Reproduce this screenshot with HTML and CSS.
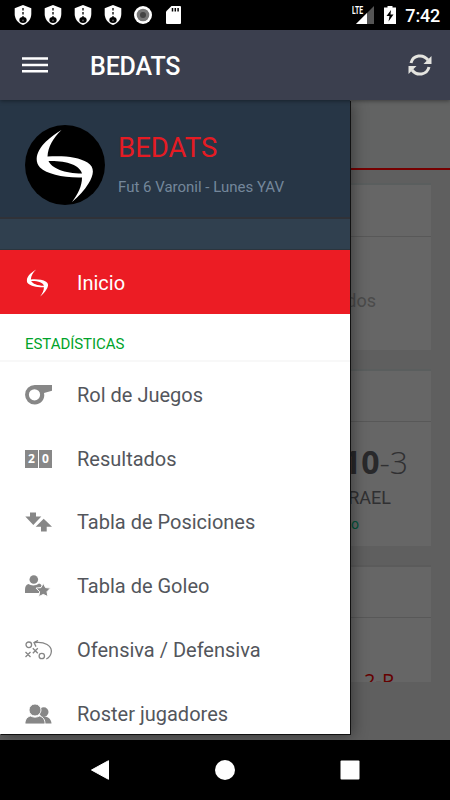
FILE: index.html
```html
<!DOCTYPE html>
<html lang="es">
<head>
<meta charset="utf-8">
<title>BEDATS</title>
<link rel="stylesheet" href="styles.css">
</head>
<body>
<svg class="defs" aria-hidden="true">
  <defs>
    <symbol id="shield" viewBox="0 0 18 20">
      <path fill="#fff" d="M9 0 17.300 3.200V9c0 5-3.300 9-8.300 11C4 18 .7 14 .7 9V3.200z"/>
      <path stroke="#000" stroke-width="1.300" stroke-dasharray="2.500 1.500" d="M9 3v9"/>
      <ellipse cx="9" cy="15" rx="3.700" ry="3"/><circle cx="9" cy="15.500" r="1" fill="#555"/>
    </symbol>
    <symbol id="swirl" viewBox="0 0 58 74">
      <path fill="currentColor" fill-rule="evenodd" d="M25.500 1C17 9 12 18 11.500 27.500c17-1 31 .5 40 6 8 5 6 13 1 21-4 7-10 13-16.500 18.500C42 65 46 57 46 48.500 27 49 11 45 4 38.500-3 31 2 20 10 12.500 15 8 20 4 25.500 1zM12.500 32c3 7 16 12.500 33.500 12.500C44 36 30 31.500 12.500 32z"/>
    </symbol>
  </defs>
</svg>
<div class="screen">
  <div class="status">
    <div class="status-left">
      <svg class="shield"><use href="#shield"/></svg>
      <svg class="shield"><use href="#shield"/></svg>
      <svg class="shield"><use href="#shield"/></svg>
      <svg class="shield"><use href="#shield"/></svg>
      <svg class="disc" viewBox="0 0 18 18"><circle cx="9" cy="9" r="9" fill="#fff"/><circle cx="9" cy="9" r="6.300" fill="#777"/><circle cx="9" cy="9" r="3" fill="#444"/></svg>
      <svg class="sd" viewBox="0 0 15 18"><path fill="#fff" d="M5.500 0H14q1 0 1 1v16q0 1-1 1H1q-1 0-1-1V5.500z"/><path stroke="#000" stroke-width="1.500" d="M6.500 2v3.500M9.300 2v3.500M12.100 2v3.500"/></svg>
    </div>
    <div class="status-right">
      <span class="lte">LTE</span>
      <svg class="signal" viewBox="0 0 18 18"><path fill="#555" d="M18 0v18H0z"/><path fill="#fff" d="M11 7v11H0z"/></svg>
      <svg class="battery" viewBox="0 0 12 18"><path fill="#fff" d="M3.500 0h5v1.500H12V18H0V1.500h3.500z"/><path d="M7 4 2.500 10H5.500L4.500 15.500 9.500 8.500H6.500z"/></svg>
      <span class="clock">7:42</span>
    </div>
  </div>
  <header class="appbar">
    <svg class="burger" viewBox="0 0 26 16"><path stroke="#fff" stroke-width="2.500" d="M0 1.500h26M0 8h26M0 14.300h26"/></svg>
    <h1>BEDATS</h1>
    <svg class="sync" viewBox="0 0 24 22"><g fill="none" stroke="#e4e4df" stroke-width="3"><path d="M3 9C5 1 15-.5 20 6M21 13C19 21 9 22.500 4 16"/></g><path fill="#e4e4df" d="M23.500 2v8h-8zM.5 20v-8h8z"/></svg>
  </header>
  <main class="content">
    <div class="topband"></div>
    <section class="card first"><div class="card-head"></div><div class="card-body"><span class="faded">Sin resultados</span></div></section>
    <section class="card second"><div class="card-head"></div><div class="card-body"><div class="score"><b>10</b>-3</div><div class="team">ISRAEL</div><div class="state">Jugado</div></div></section>
    <section class="card third"><div class="card-head"></div><div class="card-body"><div class="pending">2-P</div></div></section>
  </main>
  <aside class="drawer">
    <div class="profile">
      <div class="avatar"><svg viewBox="0 0 58 74" preserveAspectRatio="none"><use href="#swirl"/></svg></div>
      <div class="who"><h2>BEDATS</h2><p>Fut 6 Varonil - Lunes YAV</p></div>
    </div>
    <div class="strip"></div>
    <a class="item active"><svg class="logo" viewBox="0 0 58 74"><use href="#swirl"/></svg><span>Inicio</span></a>
    <div class="heading">ESTADÍSTICAS</div>
    <nav>
      <a class="item"><svg viewBox="0 0 27 20"><path fill="#878787" fill-rule="evenodd" d="M9.800 0H27v5.700l-8 2.300c1.500 6-3 11.500-9.200 11.500A9.750 9.750 0 0 1 9.800 0zm-.3 4.200a5.600 5.600 0 1 0 0 11.200 5.600 5.600 0 0 0 0-11.200z"/></svg><span>Rol de Juegos</span></a>
      <a class="item"><span class="flip"><b>2</b><b>0</b></span><span>Resultados</span></a>
      <a class="item"><svg viewBox="0 0 27 20"><path fill="#878787" d="M5 .5h6v4h5.300L8.300 13 .3 4.500H5zM18.700 6.800 27 14.800h-5.300v4.700H16v-4.700h-5.300z"/></svg><span>Tabla de Posiciones</span></a>
      <a class="item"><svg class="scorer" viewBox="0 0 27 22"><g fill="#878787"><circle cx="8.800" cy="4.500" r="4.300"/><path d="M3.500 9C6 11 11 11 14 8.500c2 .5 3 2 3.500 4L12 13l4 3.500-1 1.500H0v-3C0 12 1 9.500 3.500 9z"/><path stroke="#fff" d="m18.300 8.300 2.200 4.300 5 .5-3.500 3.600 1 5-4.700-2.300-4.600 2.300.9-5-3.600-3.600 5-.5z"/></g></svg><span>Tabla de Goleo</span></a>
      <a class="item"><svg viewBox="0 0 27 20"><g fill="none" stroke="#858585" stroke-width="1.300"><circle cx="3.800" cy="4.800" r="2.800"/><circle cx="16.800" cy="16" r="2.700"/><path d="m.5 12 5 5m0-5-5 5M7.800 8.300l5 5m0-5-5 5M13 .5 9 2.600l2 4M9 2.600C20 1 27 6 26.300 12c-.3 3-2 5.500-5 7"/></g></svg><span>Ofensiva / Defensiva</span></a>
      <a class="item"><svg viewBox="0 0 27 20"><g fill="#878787"><circle cx="18.800" cy="8" r="4.700"/><path d="M15 12.500c6-1 11 1 11.500 7H15z"/><g stroke="#fff" stroke-width=".9"><circle cx="10" cy="6" r="6"/><path d="M0 20c0-4 1.500-7 5.500-8 3 1.500 6 1.500 9 0 4 1 5.500 4 5.500 8z"/></g></g></svg><span>Roster jugadores</span></a>
    </nav>
  </aside>
  <footer class="navbar">
    <svg viewBox="0 0 20 20"><path fill="#fff" stroke="#fff" stroke-linejoin="round" d="M18.500.7v18.600L1.500 10z"/></svg>
    <svg viewBox="0 0 20 20"><circle cx="10" cy="10" r="10" fill="#fff"/></svg>
    <svg viewBox="0 0 20 20"><rect x=".5" y=".5" width="19" height="19" rx="1" fill="#fff"/></svg>
  </footer>
</div>
</body>
</html>
```
FILE: styles.css
```css
* { box-sizing: border-box; }
body { margin: 0; font-family: Roboto, sans-serif; background: #000; }
h1, h2, p { margin: 0; font-weight: 400; }
svg { display: block; flex: none; }
.defs { position: absolute; width: 0; height: 0; }
.screen { position: relative; width: 450px; height: 800px; display: flex; flex-direction: column; overflow: hidden; }

.status { height: 30px; flex: none; background: #000; display: flex; justify-content: space-between; padding: 0 10px 0 14px; color: #fff; }
.status-left, .status-right { display: flex; align-items: center; }
.shield { width: 18px; height: 20px; margin-right: 12px; }
.disc { width: 18px; height: 18px; margin-right: 14px; }
.sd { width: 15px; height: 18px; }
.lte { font-size: 11px; font-weight: 700; line-height: 10px; align-self: flex-start; margin-top: 6px; width: 4px; white-space: nowrap; transform: scaleX(.62); transform-origin: left; }
.signal { width: 18px; height: 18px; margin-right: 10px; }
.battery { width: 12px; height: 18px; margin-right: 9px; }
.clock { font-size: 18px; font-weight: 500; line-height: 30px; letter-spacing: -.2px; padding-top: 1px; }

.appbar { position: relative; z-index: 3; height: 70px; flex: none; background: #3b3f4e; display: flex; align-items: center; padding: 0 18px 0 22px; box-shadow: 0 1px 4px rgba(0, 0, 0, .4); }
.burger { width: 26px; height: 16px; margin-right: 42px; }
.appbar h1 { flex: 1; font-size: 25px; font-weight: 500; line-height: 70px; letter-spacing: -.15px; color: #fff; padding-top: 3px; }
.sync { width: 24px; height: 22px; }

.content { flex: 1; background: #5f5f5f; overflow: hidden; }
.topband { height: 70px; background: #626363; border-bottom: 2px solid #760000; }
.card { width: 413px; margin-left: 18px; background: #666; border-top: 2px solid #5a5e5e; overflow: hidden; text-align: right; }
.first { margin-top: 13px; height: 167px; }
.second { margin-top: 19px; height: 177px; }
.third { margin-top: 19px; height: 117px; border-top-color: #5b5b5b; }
.card-head { height: 52px; border-bottom: 1px solid #585858; }
.second .card-head, .third .card-head { height: 51px; }
.card-body { display: flex; flex-direction: column; align-items: flex-end; }
.faded { margin: 52px 55px 0 0; font-size: 18px; line-height: 24px; color: #4b4b4b; }
.score { margin: 18px 23px 0 0; font: 300 32px/44px "Open Sans", sans-serif; color: #303032; }
.score b { font-weight: 700; color: #29292b; }
.team { margin: 2px 40px 0 0; font-size: 18px; line-height: 24px; color: #303032; }
.state { margin: 4px 72px 0 0; font-size: 14px; line-height: 20px; color: #00543a; }
.pending { margin: 49px 37px 0 0; font: 400 20px/28px "Open Sans", sans-serif; color: #650000; }

.drawer { position: absolute; z-index: 2; top: 100px; left: 0; width: 350px; height: 634px; background: #fff; overflow: hidden; box-shadow: 1px 1px 0 #111, 3px 2px 14px rgba(0, 0, 0, .4); }
.profile { height: 119px; background: #273646; border-bottom: 2px solid #303238; display: flex; padding: 25px 0 0 25px; }
.avatar { width: 80px; height: 80px; flex: none; border-radius: 50%; background: #000; color: #fff; padding: 4px 0 0 11px; }
.avatar svg { width: 58px; height: 74px; }
.who { margin-left: 13px; white-space: nowrap; }
.who h2 { font-size: 27.5px; line-height: 34px; margin-top: 6px; color: #e51b23; }
.who p { font-size: 15px; line-height: 20px; margin-top: 12px; color: #74879b; }
.strip { height: 31px; background: #30404f; border-bottom: 1px solid #2b353e; }
.item { height: 63.8px; display: flex; align-items: center; padding: 2px 0 0 25px; font-size: 20px; color: #53565c; white-space: nowrap; }
.item > svg { width: 27px; height: 20px; margin-right: 25px; }
.item .scorer { height: 22px; }
.item.active { height: 64px; background: #ec1c24; color: #fff; }
.item.active .logo { width: 25px; height: 28px; margin-right: 27px; }
.heading { height: 48px; padding: 7px 0 0 25px; font-size: 15px; line-height: 46px; letter-spacing: -.05px; color: #00a32a; border-bottom: 2px solid #f8f8f8; }
.flip { width: 27px; height: 18px; display: flex; gap: 1px; margin-right: 25px; }
.flip b { flex: 1; background: #878787; color: #fff; font: 700 12px/18px "Open Sans", sans-serif; text-align: center; }

.navbar { height: 60px; flex: none; background: #000; display: flex; align-items: center; justify-content: center; gap: 105px; position: relative; z-index: 3; }
.navbar svg { width: 20px; height: 20px; }
```
